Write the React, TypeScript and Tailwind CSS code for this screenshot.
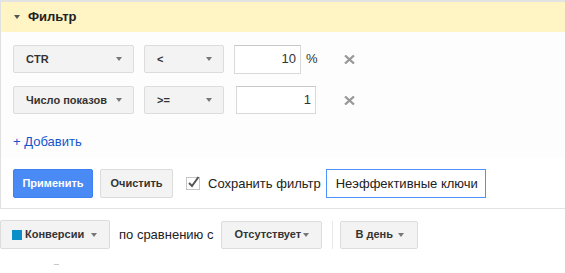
import React from "react";

const Arrow = () => (
  <span className="inline-block w-0 h-0 border-l-[3.5px] border-r-[3.5px] border-t-[4px] border-l-transparent border-r-transparent border-t-[#777]" />
);

const Drop = ({ label, w, pl = "pl-[12px]", pr = "pr-[11px]" }: { label: string; w: string; pl?: string; pr?: string }) => (
  <div
    className={`${w} ${pl} ${pr} h-[28px] flex items-center justify-between rounded-[2px] border border-[#dcdcdc] bg-[#f3f3f3] text-[11px] font-bold text-[#333]`}
  >
    <span>{label}</span>
    <Arrow />
  </div>
);

const XIcon = () => (
  <svg width="11" height="9" viewBox="0 0 11 9" className="block">
    <path d="M1 0.5 L10 8.5 M10 0.5 L1 8.5" stroke="#999" strokeWidth="2.3" />
  </svg>
);

export default function App() {
  return (
    <div className="w-[565px] h-[273px] overflow-hidden bg-white font-['Liberation_Sans',Arial,sans-serif] text-[#222]">
      <div className="border-l border-t-2 border-b border-l-[#e0e0e0] border-t-[#e3e3e3] border-b-[#e3e3e3]">
        <div className="h-[30px] bg-[#fff4c4] flex items-center pl-[13px]">
          <span className="inline-block w-0 h-0 border-l-[3.5px] border-r-[3.5px] border-t-[4px] border-l-transparent border-r-transparent border-t-[#555]" />
          <span className="ml-[8px] text-[13px] font-bold text-[#222]">Фильтр</span>
        </div>
        <div className="bg-[#fdfdfd] pl-[12px] pt-[13px] h-[126px]">
          <div className="flex items-center h-[28px]">
            <Drop label="CTR" w="w-[121px]" />
            <div className="ml-[10px]">
              <Drop label="<" w="w-[80px]" />
            </div>
            <div className="ml-[10px] w-[110px] flex items-center h-[28px]">
              <div className="w-[67px] h-[29px] border border-[#d9d9d9] border-t-[#c8c8c8] bg-white flex items-center justify-end pr-[4px] text-[13px] text-[#333]">
                10
              </div>
              <span className="ml-[5px] text-[13px] text-[#333]">%</span>
            </div>
            <XIcon />
          </div>
          <div className="flex items-center h-[28px] mt-[13px]">
            <Drop label="Число показов" w="w-[121px]" />
            <div className="ml-[10px]">
              <Drop label=">=" w="w-[80px]" />
            </div>
            <div className="ml-[12px] w-[108px] flex items-center h-[28px]">
              <div className="w-[80px] h-[28px] border border-[#d9d9d9] border-t-[#c8c8c8] bg-white flex items-center justify-end pr-[4px] text-[13px] text-[#333]">
                1
              </div>
            </div>
            <XIcon />
          </div>
          <div className="mt-[20px] text-[13px] text-[#1155cc] leading-[16px]">+ Добавить</div>
        </div>
        <div className="bg-white pl-[12px] pt-[11px] pb-[10px] flex items-center">
          <div className="w-[80px] h-[29px] rounded-[2px] border border-[#3d80f3] bg-[#4a8af4] text-white text-[11px] font-bold flex items-center justify-center">
            Применить
          </div>
          <div className="ml-[7px] w-[73px] h-[29px] rounded-[2px] border border-[#dcdcdc] bg-[#f3f3f3] text-[#333] text-[11px] font-bold flex items-center justify-center">
            Очистить
          </div>
          <svg width="16" height="15" viewBox="0 0 16 15" className="ml-[13px] mt-[-2px]">
            <rect x="0.5" y="2.5" width="13" height="12" fill="white" stroke="#c6c6c6" />
            <path d="M3 8 L6 11 L12.5 2" fill="none" stroke="#555" strokeWidth="2" />
          </svg>
          <span className="ml-[6px] text-[13px] text-[#222]">Сохранить фильтр</span>
          <div className="ml-[5px] w-[160px] h-[29px] border border-[#4d90fe] bg-white flex items-center pl-[9px] text-[13px] text-[#222]">
            Неэффективные ключи
          </div>
        </div>
      </div>
      <div className="pt-[11px] flex items-center">
        <div className="w-[110px] h-[29px] rounded-[2px] border border-[#dcdcdc] bg-[#f3f3f3] flex items-center pl-[11px] pr-[10px] text-[11px] font-bold text-[#333]">
          <span className="w-[10px] h-[10px] bg-[#0b8fc8]" />
          <span className="ml-[3px]">Конверсии</span>
          <span className="ml-[7px] flex"><Arrow /></span>
        </div>
        <span className="ml-[9px] text-[13px] text-[#222]">по сравнению с</span>
        <div className="ml-[8px]">
          <Drop label="Отсутствует" w="w-[101px]" pr="pr-[12px]" />
        </div>
        <div className="ml-[10px] w-px h-[28px] bg-[#e8e8e8]" />
        <div className="ml-[7px]">
          <Drop label="В день" w="w-[78px]" pl="pl-[14px]" pr="pr-[13px]" />
        </div>
      </div>
      <div className="mt-[15px] ml-[54px] w-[5px] h-px bg-[#c8c8c8]" />
    </div>
  );
}
